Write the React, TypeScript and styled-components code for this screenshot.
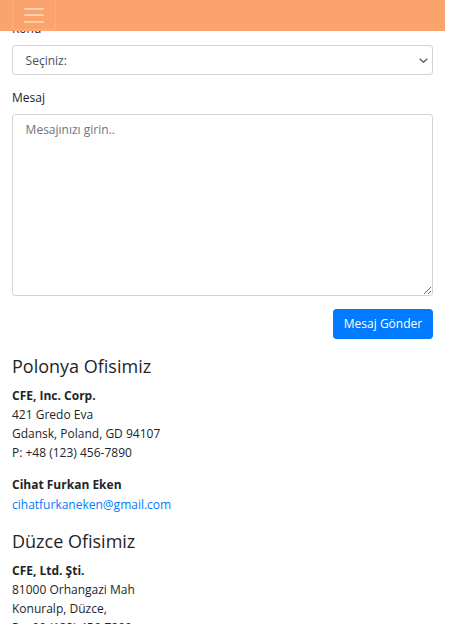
import React from "react";
import styled, { createGlobalStyle } from "styled-components";

const GlobalStyle = createGlobalStyle`
  html, body { margin: 0; padding: 0; background: #fff; }
  html { overflow: hidden; }
  body {
    font-family: "Open Sans", "Noto Sans", sans-serif;
    font-size: 12px;
    line-height: 19.2px;
    color: #212529;
  }
  * { box-sizing: border-box; }
`;

const Page = styled.div`
  width: 445px;
  position: relative;
`;

const Navbar = styled.nav`
  position: fixed;
  top: 0;
  left: 0;
  width: 445px;
  height: 31px;
  background: #faa36c;
  display: flex;
  align-items: flex-start;
  padding: 0 12px;
  z-index: 10;
`;

const Toggler = styled.button`
  width: 44px;
  height: 31px;
  margin-top: -1px;
  border: 1px solid rgba(255, 255, 255, 0.14);
  border-radius: 3.2px;
  background: transparent;
  padding: 0;
  display: flex;
  align-items: center;
  justify-content: center;
  cursor: pointer;
`;

const Container = styled.main`
  padding: 19.4px 12px 0;
`;

const FormGroup = styled.div<{ $mb?: number }>`
  margin-bottom: ${(p) => (p.$mb ?? 12.8)}px;
`;

const Label = styled.label`
  display: inline-block;
  margin-bottom: 6.4px;
  line-height: 19.2px;
`;

const SelectWrap = styled.div`
  position: relative;
`;

const Select = styled.select`
  display: block;
  width: 100%;
  height: 30.4px;
  padding: 0 24px 0 12.6px;
  font-family: inherit;
  font-size: 12px;
  color: #495057;
  background: #fff;
  border: 1px solid #ced4da;
  border-radius: 3.2px;
  appearance: none;
  -webkit-appearance: none;
  outline: none;
`;

const Chevron = styled.svg`
  position: absolute;
  right: 5px;
  top: 13px;
  pointer-events: none;
`;

const TextArea = styled.textarea`
  display: block;
  width: 100%;
  height: 182px;
  padding: 4.8px 12.6px;
  font-family: inherit;
  font-size: 12px;
  line-height: 19.2px;
  color: #495057;
  border: 1px solid #ced4da;
  border-radius: 3.2px;
  outline: none;
  resize: vertical;
  &::placeholder {
    color: #6c757d;
    opacity: 1;
  }
`;

const ButtonRow = styled.div`
  display: flex;
  justify-content: flex-end;
`;

const Button = styled.button`
  height: 30.4px;
  width: 100px;
  padding: 0 9.6px;
  font-family: inherit;
  font-size: 12px;
  color: #fff;
  background: #007bff;
  border: 1px solid #007bff;
  border-radius: 3.2px;
  cursor: pointer;
`;

const Heading = styled.h4`
  margin: 16.4px 0 7.4px;
  font-size: 18px;
  font-weight: 400;
  line-height: 23.04px;
  color: #212529;
`;

const Address = styled.address`
  margin: 0 0 12.8px;
  font-style: normal;
  line-height: 19.2px;
`;

const Strong = styled.strong`
  font-weight: 700;
`;

const Line = styled.div``;

const MailLink = styled.a`
  color: #007bff;
  text-decoration: none;
`;

type Office = {
  title: string;
  company: string;
  lines: string[];
};

const offices: Office[] = [
  {
    title: "Polonya Ofisimiz",
    company: "CFE, Inc. Corp.",
    lines: ["421 Gredo Eva", "Gdansk, Poland, GD 94107", "P: +48 (123) 456-7890"],
  },
  {
    title: "Düzce Ofisimiz",
    company: "CFE, Ltd. Şti.",
    lines: ["81000 Orhangazi Mah", "Konuralp, Düzce,", "P: +90 (123) 456-7890"],
  },
];

export default function App() {
  return (
    <Page>
      <GlobalStyle />
      <Navbar>
        <Toggler aria-label="Menü">
          <svg width="20" height="20" viewBox="0 0 20 20">
            <g stroke="rgba(255,255,255,0.55)" strokeWidth="1.8" strokeLinecap="round">
              <line x1="1" y1="3.8" x2="19" y2="3.8" />
              <line x1="1" y1="10.2" x2="19" y2="10.2" />
              <line x1="1" y1="16.8" x2="19" y2="16.8" />
            </g>
          </svg>
        </Toggler>
      </Navbar>
      <Container>
        <FormGroup>
          <Label>Konu</Label>
          <SelectWrap>
            <Select defaultValue="">
              <option value="">Seçiniz:</option>
            </Select>
            <Chevron width="9" height="5" viewBox="0 0 9 5">
              <polyline points="0.7,0.7 4.5,4.2 8.3,0.7" fill="none" stroke="#555" strokeWidth="1.3" />
            </Chevron>
          </SelectWrap>
        </FormGroup>
        <FormGroup>
          <Label>Mesaj</Label>
          <TextArea placeholder="Mesajınızı girin.." />
        </FormGroup>
        <ButtonRow>
          <Button>Mesaj Gönder</Button>
        </ButtonRow>
        {offices.map((o, i) => (
          <section key={o.title}>
            <Heading>{o.title}</Heading>
            <Address>
              <Strong>{o.company}</Strong>
              {o.lines.map((l) => (
                <Line key={l}>{l}</Line>
              ))}
            </Address>
            {i === 0 && (
              <Address>
                <Strong>Cihat Furkan Eken</Strong>
                <Line>
                  <MailLink href="mailto:cihatfurkaneken@gmail.com">cihatfurkaneken@gmail.com</MailLink>
                </Line>
              </Address>
            )}
          </section>
        ))}
      </Container>
    </Page>
  );
}
